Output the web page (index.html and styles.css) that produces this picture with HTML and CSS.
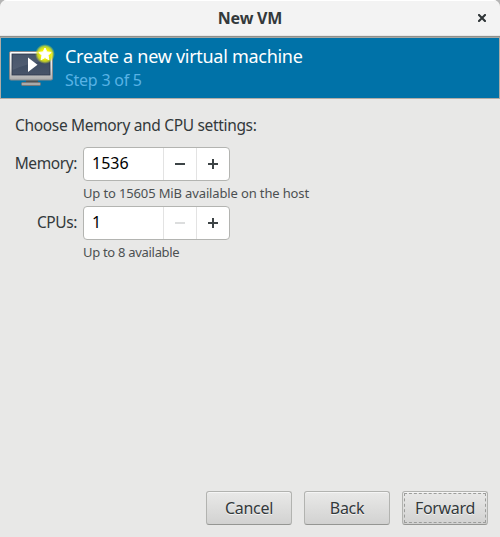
FILE: index.html
```
<!DOCTYPE html>
<html lang="en">
<head>
<meta charset="utf-8">
<title>New VM</title>
<link rel="stylesheet" href="styles.css">
</head>
<body>
<div class="window">
  <header class="titlebar">
    <span></span>
    <h1><span>New VM</span></h1>
    <button class="close" aria-label="Close"><svg width="8" height="8" viewBox="0 0 8 8"><path d="M1 1L7 7M7 1L1 7" stroke="#2e3436" stroke-width="2.1" stroke-linecap="square"/></svg></button>
  </header>
  <section class="banner">
    <svg class="vm-icon" width="48" height="48" viewBox="0 0 48 48">
      <defs>
        <linearGradient id="frame" x2="0" y2="1"><stop stop-color="#fff"/><stop offset=".6" stop-color="#ddd"/><stop offset="1" stop-color="#aaa"/></linearGradient>
        <linearGradient id="screen" x2="0" y2="1"><stop stop-color="#38485f"/><stop offset="1" stop-color="#485469"/></linearGradient>
        <radialGradient id="glow"><stop offset=".5" stop-color="#f2f200"/><stop offset=".75" stop-color="#dfe81c" stop-opacity=".8"/><stop offset="1" stop-color="#c8d83f" stop-opacity="0"/></radialGradient>
      </defs>
      <path d="M18 37h12v5H18z" fill="#4e5255"/>
      <rect x="13.500" y="39.500" width="19" height="3" rx="1" fill="#aaa" stroke="#777"/>
      <rect x="1.500" y="8.500" width="43" height="28.500" rx="1.500" fill="url(#frame)" stroke="#85898c"/>
      <rect x="4" y="11" width="38" height="21" fill="url(#screen)" stroke="#2d394b" stroke-width=".8"/>
      <path d="M4.500 11.500H41V17Q20 20 4.500 27z" fill="#fff" opacity=".08"/>
      <path d="M20 14.500L29.500 21.700L20 29z" fill="#fff"/>
      <circle cx="37" cy="11" r="10" fill="url(#glow)"/>
      <path d="M37 5l1.900 3.900 4.300.5-3.200 3 .9 4.300-3.900-2.100-3.900 2.100.9-4.300-3.200-3 4.300-.5z" fill="#fff" stroke="#fff" stroke-linejoin="round"/>
    </svg>
    <div class="heading">
      <h2><span>Create a new virtual machine</span></h2>
      <p><span>Step 3 of 5</span></p>
    </div>
  </section>
  <main>
    <p class="intro"><span>Choose Memory and CPU settings:</span></p>
    <div class="form">
      <label class="l-mem"><span>Memory:</span></label>
      <div class="spin">
        <span class="value v-mem"><span>1536</span></span>
        <button aria-label="Decrease"><i class="minus"></i></button>
        <button aria-label="Increase"><i class="plus"></i></button>
      </div>
      <p class="hint h-mem"><span>Up to 15605 MiB available on the host</span></p>
      <label class="l-cpu"><span>CPUs:</span></label>
      <div class="spin">
        <span class="value"><span>1</span></span>
        <button aria-label="Decrease" disabled><i class="minus"></i></button>
        <button aria-label="Increase"><i class="plus"></i></button>
      </div>
      <p class="hint h-cpu"><span>Up to 8 available</span></p>
    </div>
  </main>
  <footer>
    <button class="btn b-cancel"><span>Cancel</span></button>
    <button class="btn b-back"><span>Back</span></button>
    <button class="btn b-forward"><span>Forward</span></button>
  </footer>
</div>
</body>
</html>
```
FILE: styles.css
```
* { box-sizing: border-box; margin: 0; padding: 0; }
body { background: #b5b5b5; font: 16px/20px "Noto Sans", "Open Sans", sans-serif; color: #33393b; }
button { font: inherit; color: inherit; border: 0; background: none; }
h1 span, h2 span, p span, label span, .btn span { white-space: nowrap; }
.window { width: 500px; height: 537px; display: flex; flex-direction: column; background: #e8e8e7; border-radius: 7px 7px 0 0; overflow: hidden; }
.titlebar { height: 38px; flex: none; display: grid; grid-template-columns: 40px 1fr 40px; background: #f3f3f3; border-bottom: 1px solid #a6a7a3; box-shadow: inset 0 1px #fff, inset 0 -1px #8e8f8b, inset 0 -2px #e6e6e6; }
h1 { font-size: 16px; line-height: 36px; font-weight: 700; text-align: center; letter-spacing: -.2px; }
.close { display: flex; align-items: center; justify-content: center; padding: 0 0 1px 4px; }
.banner { height: 61px; flex: none; display: flex; background: #0072a8; border: solid #b0aca6; border-width: 0 1px 1px; padding: 5px 0 0 7px; }
.heading { padding-left: 9px; }
h2 { font-size: 18px; line-height: 26px; font-weight: 400; color: #fff; letter-spacing: -.28px; }
.heading p { line-height: 23px; color: #59b2e5; letter-spacing: -.24px; }
main { flex: 1; padding: 16px 15px 0; }
.intro { height: 32px; font-size: 15.5px; letter-spacing: -.33px; }
.form { display: grid; grid-template-columns: 62px 147px; column-gap: 6px; grid-template-rows: 34px 25px 34px 25px; }
label { font-size: 15.5px; line-height: 32px; display: flex; justify-content: flex-end; letter-spacing: -.4px; }
.spin { display: flex; background: #fff; border: 1px solid #b3b4b1; border-radius: 4px; }
.value { width: 79px; padding-left: 8px; line-height: 31px; color: #000; }
.spin button { width: 33px; border-left: 1px solid #e3e3e3; display: flex; align-items: center; justify-content: center; }
.minus, .plus { display: block; width: 10px; height: 10px; background: linear-gradient(#3d4446, #3d4446) center / 10px 2px no-repeat; }
.plus { background: linear-gradient(#3d4446, #3d4446) center / 10px 2px no-repeat, linear-gradient(#3d4446, #3d4446) center / 2px 10px no-repeat; }
button:disabled .minus { opacity: .18; }
.hint { grid-column: 2; font-size: 13px; line-height: 24px; color: #4c5052; letter-spacing: -.14px; }
.h-cpu { letter-spacing: -.3px; }
footer { display: flex; justify-content: flex-end; gap: 12px; padding: 0 12px 12px 0; }
.btn { width: 86px; height: 34px; border: 1px solid #b2b3b0; border-bottom-color: #959693; border-radius: 3px; background: linear-gradient(#e9e9e8, #d2d2d1); box-shadow: inset 0 1px #f5f5f5; text-shadow: 0 1px #f4f4f4; line-height: 30px; text-align: center; letter-spacing: -.3px; }
.b-forward { outline: 1px dashed #9c9d9b; outline-offset: -3px; }
```
